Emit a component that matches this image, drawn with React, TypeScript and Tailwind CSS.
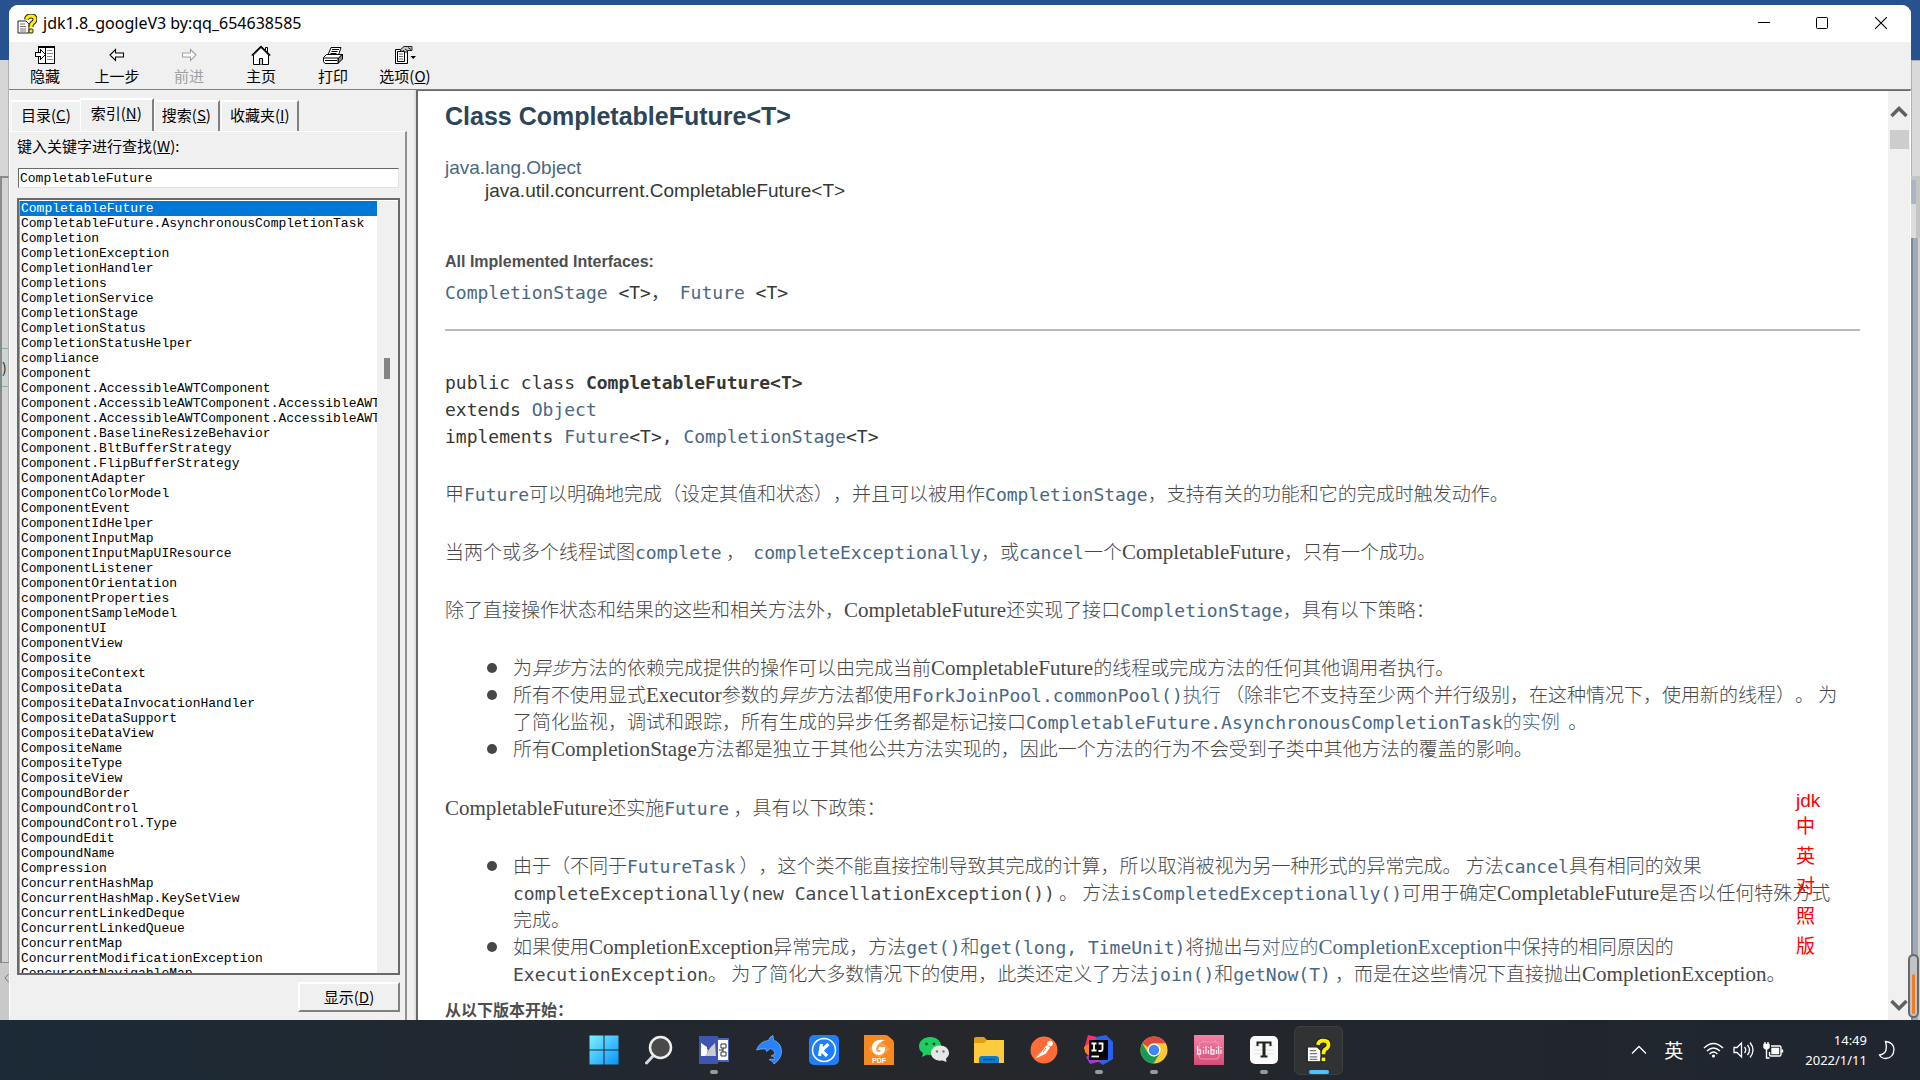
import type { ReactNode } from 'react';

const keywords = [
  'CompletableFuture', 'CompletableFuture.AsynchronousCompletionTask', 'Completion', 'CompletionException',
  'CompletionHandler', 'Completions', 'CompletionService', 'CompletionStage', 'CompletionStatus',
  'CompletionStatusHelper', 'compliance', 'Component', 'Component.AccessibleAWTComponent',
  'Component.AccessibleAWTComponent.AccessibleAWTComponentHandler',
  'Component.AccessibleAWTComponent.AccessibleAWTFocusHandler',
  'Component.BaselineResizeBehavior', 'Component.BltBufferStrategy', 'Component.FlipBufferStrategy',
  'ComponentAdapter', 'ComponentColorModel', 'ComponentEvent', 'ComponentIdHelper', 'ComponentInputMap',
  'ComponentInputMapUIResource', 'ComponentListener', 'ComponentOrientation', 'componentProperties',
  'ComponentSampleModel', 'ComponentUI', 'ComponentView', 'Composite', 'CompositeContext', 'CompositeData',
  'CompositeDataInvocationHandler', 'CompositeDataSupport', 'CompositeDataView', 'CompositeName',
  'CompositeType', 'CompositeView', 'CompoundBorder', 'CompoundControl', 'CompoundControl.Type',
  'CompoundEdit', 'CompoundName', 'Compression', 'ConcurrentHashMap', 'ConcurrentHashMap.KeySetView',
  'ConcurrentLinkedDeque', 'ConcurrentLinkedQueue', 'ConcurrentMap', 'ConcurrentModificationException',
  'ConcurrentNavigableMap',
];

const mono = "font-['DejaVu_Sans_Mono','Noto_Sans_CJK_SC',monospace]";

function Code({ children }: { children: ReactNode }) {
  return <code className="font-['DejaVu_Sans_Mono','Noto_Sans_CJK_SC',monospace] text-[18px] leading-none">{children}</code>;
}
function CodeLink({ children }: { children: ReactNode }) {
  return <a href="#" className="font-['DejaVu_Sans_Mono','Noto_Sans_CJK_SC',monospace] text-[18px] leading-none text-[#4a6782]">{children}</a>;
}
function Link({ children }: { children: ReactNode }) {
  return <a href="#" className="text-[#4a6782]">{children}</a>;
}
function Latin({ children }: { children: ReactNode }) {
  return <span className="font-['Liberation_Serif',serif] text-[21px] leading-none">{children}</span>;
}

function HelpIcon({ className }: { className: string }) {
  return (
    <svg viewBox="0 0 20 20" className={className} aria-hidden="true">
      <path d="M1 7h8l3 3v9H1z" fill="#fff" stroke="#222" />
      <path d="M3 10h5M3 12.500h6M3 15h6M3 17h6" stroke="#777" />
      <path d="M9.500 5.500Q10 2 14 2t4 3.500q0 2-2.500 3.500-1.500 1-1.500 4" fill="none" stroke="#222" strokeWidth="5" />
      <path d="M9.500 5.500Q10 2 14 2t4 3.500q0 2-2.500 3.500-1.500 1-1.500 4" fill="none" stroke="#ffee00" strokeWidth="3" />
      <rect x="12" y="15" width="4" height="4" rx="1" fill="#ffee00" stroke="#222" />
    </svg>
  );
}

function HideIcon() {
  return (
    <svg width="20" height="20" viewBox="0 0 20 20" shapeRendering="crispEdges" aria-hidden="true">
      <path d="M3.500 1.500h16v17h-16z" fill="#fff" stroke="#000" />
      <path d="M10.500 1v17M4 2.500h15" stroke="#000" />
      <path d="M12 5.500h5M12 8.500h6M12 11.500h5M12 14.500h6" stroke="#888" />
      <path d="M.500 7.500h5v-3l5 5-5 5v-3h-5z" fill="#fff" stroke="#000" />
    </svg>
  );
}
function ArrowIcon({ flip, color }: { flip?: boolean; color: string }) {
  return (
    <svg width="20" height="20" viewBox="0 0 20 20" className={flip ? '-scale-x-100' : ''} aria-hidden="true">
      <path d="M3 10l5.500-5.500v3.500h8v4h-8v3.500z" fill="#fff" stroke={color} strokeWidth="1.100" />
    </svg>
  );
}
function HomeIcon() {
  return (
    <svg width="20" height="20" viewBox="0 0 20 20" aria-hidden="true">
      <path d="M14.500 6V2.500h2V8" fill="#fff" stroke="#000" />
      <path d="M2.500 10v9.500h15V10L10 2.500z" fill="#fff" stroke="#000" />
      <path d="M.800 10.500L10 1.500l9.200 9" fill="none" stroke="#000" strokeWidth="1.500" />
      <path d="M8.500 19.500v-6h3v6" fill="#ccc" stroke="#000" />
    </svg>
  );
}
function PrintIcon() {
  return (
    <svg width="20" height="20" viewBox="0 0 20 20" aria-hidden="true">
      <path d="M5 10L8 2.500h10L15.500 10z" fill="#fff" stroke="#000" />
      <path d="M9 4.500h7M8.500 6.500h6M7.500 8.500h6" stroke="#000" />
      <path d="M15 14l4.500-5v5L15 18.500z" fill="#888" stroke="#000" />
      <path d="M.500 12.500l3-3h15.500l-4 4H.500z" fill="#fff" stroke="#000" />
      <path d="M.500 13h14.500v5.500H2l-1.500-2z" fill="#fff" stroke="#000" />
      <path d="M2 15.500h12" stroke="#000" />
    </svg>
  );
}
function OptionsIcon() {
  return (
    <svg width="22" height="20" viewBox="0 0 22 20" aria-hidden="true">
      <path d="M1.500 4.500h12v14h-12z" fill="#fff" stroke="#000" />
      <path d="M3.500 6.500h7v10h-7z" fill="#fff" stroke="#000" />
      <path d="M5 9h4M5 11.500h4M5 14h4" stroke="#666" />
      <path d="M6 5l4-3.500h8v4h-4l-2 2-2-2-2 1z" fill="#c8c8c8" stroke="#222" />
      <path d="M11 4l3 2M14 2.500l3 2" stroke="#222" />
      <path d="M16.500 11h5.500l-2.750 3z" fill="#000" />
    </svg>
  );
}

function Tool({ icon, label, disabled }: { icon: ReactNode; label: ReactNode; disabled?: boolean }) {
  return (
    <button
      type="button"
      disabled={disabled}
      className="flex w-[72px] flex-col items-center pt-[3px] leading-[22px] text-black disabled:text-[#a0a0a0]"
    >
      {icon}
      <span>{label}</span>
    </button>
  );
}

function Tab({ label, hotkey, active }: { label: string; hotkey: string; active?: boolean }) {
  return (
    <button
      type="button"
      role="tab"
      aria-selected={!!active}
      className={
        active
          ? 'h-[33px] border-t-2 border-r-2 border-l border-t-white border-r-[#808080] border-l-white bg-[#f0f0f0] px-2.5 pb-1'
          : 'mr-px h-[31px] border-t-2 border-r-2 border-l border-t-white border-r-[#808080] border-l-white px-[7px] pb-[2px] first:mr-0 first:border-r-0 first:px-[9px] last:px-2'
      }
    >
      {label}(<u>{hotkey}</u>)
    </button>
  );
}

function Sidebar() {
  return (
    <aside className="flex w-[398px] shrink-0 flex-col border-l border-white pt-2">
      <div role="tablist" className="flex items-end pl-px">
        <Tab label="目录" hotkey="C" />
        <Tab label="索引" hotkey="N" active />
        <Tab label="搜索" hotkey="S" />
        <Tab label="收藏夹" hotkey="I" />
      </div>
      <div className="flex min-h-0 flex-1 flex-col border-t border-r-2 border-t-white border-r-[#909090] pr-[5px] pl-[7px]">
        <label htmlFor="keyword" className="pt-[2px] leading-[24px]">
          键入关键字进行查找(<u>W</u>):
        </label>
        <input
          id="keyword"
          defaultValue="CompletableFuture"
          className="mt-[10px] mr-px ml-px h-5 border-t border-l border-t-[#696969] border-l-[#696969] border-r border-b border-r-[#e3e3e3] border-b-[#e3e3e3] bg-white px-px font-['Liberation_Mono',monospace] text-[13px] outline-none"
        />
        <div className="mt-[10px] flex min-h-0 flex-1 border-2 border-t-[#696969] border-r-[#696969] border-b-[#696969] border-l-[#696969] bg-white pt-px">
          <ul className="min-w-0 flex-1 overflow-hidden border-l border-[#a0a0a0] font-['Liberation_Mono',monospace] text-[13px] leading-[15px] text-black">
            {keywords.map((k, i) => (
              <li key={k} className={i === 0 ? 'bg-[#0078d7] pl-px whitespace-nowrap text-white' : 'pl-px whitespace-nowrap'}>
                {k}
              </li>
            ))}
          </ul>
          <div className="w-[21px] bg-[#f0f0f0] pt-[157px] pl-[7px]">
            <div className="h-[21px] w-1.5 bg-[#858585]" />
          </div>
        </div>
        <button
          type="button"
          className="mt-[7px] mb-2 h-[30px] w-[102px] self-end border-2 border-t-white border-r-[#808080] border-b-[#808080] border-l-white"
        >
          显示(<u>D</u>)
        </button>
      </div>
    </aside>
  );
}

function Item({ children }: { children: ReactNode }) {
  return (
    <li className="flex gap-4">
      <span className="mt-[10px] size-2.5 shrink-0 rounded-full bg-[#474747]" />
      <div className="min-w-0">{children}</div>
    </li>
  );
}

function Doc() {
  return (
    <article className="min-w-0 flex-1 overflow-hidden pt-[9px] pr-7 pl-[27px] font-['Noto_Sans_CJK_SC',sans-serif] text-[19px] leading-[27px] font-light text-[#474747] [text-spacing-trim:space-all]">
      <h2 className="font-['Liberation_Sans',sans-serif] text-[25px] leading-[32px] font-bold text-[#2c4557]">
        Class CompletableFuture&lt;T&gt;
      </h2>
      <div className="mt-6 font-['Liberation_Sans',sans-serif] text-[19px] leading-[23px] font-normal text-[#353833]">
        <div><Link>java.lang.Object</Link></div>
        <div className="pl-10">java.util.concurrent.CompletableFuture&lt;T&gt;</div>
      </div>
      <div className="mt-[47px] font-['Liberation_Sans',sans-serif] text-[16px] leading-[25px] font-bold text-[#4e4e4e]">
        All Implemented Interfaces:
      </div>
      <div className={`${mono} mt-[5px] text-[18px] font-normal text-[#353833]`}>
        <Link>CompletionStage</Link> &lt;T&gt;， <Link>Future</Link> &lt;T&gt;
      </div>
      <hr className="mt-[23px] border-t-2 border-[#bbb]" />
      <pre className={`${mono} mt-[38px] text-[18px] font-normal text-[#353833]`}>
        public class <b>CompletableFuture&lt;T&gt;</b>{'\n'}
        extends <Link>Object</Link>{'\n'}
        implements <Link>Future</Link>&lt;T&gt;, <Link>CompletionStage</Link>&lt;T&gt;
      </pre>
      <p className="mt-[29px]">
        甲<CodeLink>Future</CodeLink>可以明确地完成（设定其值和状态），并且可以被用作<CodeLink>CompletionStage</CodeLink>，支持有关的功能和它的完成时触发动作。
      </p>
      <p className="mt-[31px]">
        当两个或多个线程试图<CodeLink>complete</CodeLink>&nbsp;，&nbsp; <CodeLink>completeExceptionally</CodeLink>，或<CodeLink>cancel</CodeLink>一个<Latin>CompletableFuture</Latin>，只有一个成功。
      </p>
      <p className="mt-[31px]">
        除了直接操作状态和结果的这些和相关方法外，<Latin>CompletableFuture</Latin>还实现了接口<CodeLink>CompletionStage</CodeLink>，具有以下策略：
      </p>
      <ul className="mt-[31px] pr-3 pl-[42px]">
        <Item>
          为<i>异步</i>方法的依赖完成提供的操作可以由完成当前<Latin>CompletableFuture</Latin>的线程或完成方法的任何其他调用者执行。
        </Item>
        <Item>
          所有不使用显式<Latin>Executor</Latin>参数的<i>异步</i>方法都使用<CodeLink>ForkJoinPool.commonPool()</CodeLink><Link>执行</Link> （除非它不支持至少两个并行级别，在这种情况下，使用新的线程）。 为了简化监视，调试和跟踪，所有生成的异步任务都是标记接口<CodeLink>CompletableFuture.AsynchronousCompletionTask</CodeLink><Link>的实例</Link> &nbsp;。
        </Item>
        <Item>
          所有<Latin>CompletionStage</Latin>方法都是独立于其他公共方法实现的，因此一个方法的行为不会受到子类中其他方法的覆盖的影响。
        </Item>
      </ul>
      <p className="mt-8">
        <Latin>CompletableFuture</Latin>还实施<CodeLink>Future</CodeLink>&nbsp;，具有以下政策：
      </p>
      <ul className="mt-[31px] pr-3 pl-[42px]">
        <Item>
          由于（不同于<CodeLink>FutureTask</CodeLink>&nbsp;），这个类不能直接控制导致其完成的计算，所以取消被视为另一种形式的异常完成。 方法<CodeLink>cancel</CodeLink>具有相同的效果
          <Code>completeExceptionally(new CancellationException())</Code>&nbsp;。 方法<CodeLink>isCompletedExceptionally()</CodeLink>可用于确定<Latin>CompletableFuture</Latin>是否以任何特殊方式完成。
        </Item>
        <Item>
          如果使用<Latin>CompletionException</Latin>异常完成，方法<CodeLink>get()</CodeLink>和<CodeLink>get(long, TimeUnit)</CodeLink>将抛出与<Link>对应的<Latin>CompletionException</Latin>中</Link>保持的相同原因的
          <Code>ExecutionException</Code>。 为了简化大多数情况下的使用，此类还定义了方法<CodeLink>join()</CodeLink>和<CodeLink>getNow(T)</CodeLink>&nbsp;，而是在这些情况下直接抛出<Latin>CompletionException</Latin>。
        </Item>
      </ul>
      <div className="mt-[10px] text-[16px] font-bold text-[#4e4e4e]">从以下版本开始：</div>
    </article>
  );
}

function TaskItem({ name, state, children }: { name: string; state?: 'open' | 'active'; children: ReactNode }) {
  return (
    <button
      type="button"
      aria-label={name}
      className={
        state === 'active'
          ? 'relative mx-[3px] flex size-[49px] items-center justify-center rounded-md border border-[#3c3f42] bg-[#303234]'
          : 'relative flex h-[49px] w-[55px] items-center justify-center'
      }
    >
      {children}
      {state === 'open' && <span className="absolute bottom-px h-1 w-2 rounded-full bg-[#9a9a9a]" />}
      {state === 'active' && <span className="absolute bottom-0 h-1 w-5 rounded-full bg-[#4cc2ff]" />}
    </button>
  );
}

function Taskbar() {
  return (
    <footer className="grid h-[60px] shrink-0 grid-cols-[1fr_auto_1fr] items-center bg-linear-to-r from-[#1c2a37] via-[#25272b] to-[#1f2630] pl-0.5 text-white">
      <div />
      <nav className="flex items-center">
        <TaskItem name="开始">
          <svg width="30" height="30" viewBox="0 0 30 30">
            <defs>
              <linearGradient id="win" x1="0" y1="0" x2="1" y2="1">
                <stop offset="0" stopColor="#7df0ff" /><stop offset="1" stopColor="#0a93ff" />
              </linearGradient>
            </defs>
            <path d="M0.500 .500h14v14H.500zM15.500 .500h14v14h-14zM.500 15.500h14v14H.500zM15.500 15.500h14v14h-14z" fill="url(#win)" />
          </svg>
        </TaskItem>
        <TaskItem name="搜索">
          <svg width="30" height="30" viewBox="0 0 30 30">
            <path d="M9 21l-6.500 7" stroke="#d8d8d8" strokeWidth="3" strokeLinecap="round" />
            <circle cx="16.500" cy="12.500" r="10.500" fill="#4a4a4a" stroke="#eee" strokeWidth="2.500" />
          </svg>
        </TaskItem>
        <TaskItem name="Visio" state="open">
          <svg width="30" height="30" viewBox="0 0 30 30">
            <path d="M0 1h19v28H0z" fill="#3f55b0" /><path d="M19 3h11v24H19z" fill="#4a62c0" />
            <path d="M19 5h10v20H19z" fill="#fff" />
            <path d="M22 9h5v4h-5zM22 17h5v4h-5zM20 15h4v-2M24 15v2" fill="none" stroke="#333" />
            <path d="M2 8l6 4v9H2z" fill="#fff" /><path d="M16 8l-5 5-5 8h11z" fill="#ccc" /><path d="M2 8l7 7-3 6H2z" fill="#fff" />
          </svg>
        </TaskItem>
        <TaskItem name="Dolphin">
          <svg width="30" height="30" viewBox="0 0 30 30">
            <path d="M2.500 15Q6 6 14.500 5.500q1-4 4.500-5l.500 4.500Q27.500 8 27.500 17q0 4-2.500 7-2 3-5 5-1-3-5-4.500 3-1 5.500 0 .500-3-3.500-3.500 2-1.500 4-1.500-.500-5-4.500-6l-4 3-.500-2.500Q7 13.500 2.500 15z" fill="#2684ff" stroke="#9cc4f5" strokeWidth=".600" />
          </svg>
        </TaskItem>
        <TaskItem name="酷狗音乐">
          <svg width="30" height="30" viewBox="0 0 30 30">
            <rect width="30" height="30" rx="5" fill="#1e7ffb" /><circle cx="15" cy="15" r="11.500" fill="none" stroke="#fff" strokeWidth="1.500" />
            <path d="M12.500 9l-2 12M19.500 9l-7 6.500L18 21" fill="none" stroke="#fff" strokeWidth="3.200" />
          </svg>
        </TaskItem>
        <TaskItem name="福昕阅读器">
          <svg width="30" height="30" viewBox="0 0 30 30">
            <path d="M0 0h22l8 7v23H0z" fill="#f6891f" /><path d="M23 0v6h7z" fill="#f6891f" />
            <path d="M15 5l11 9-11 9-11-9z" fill="#f9a04a" />
            <path d="M21 5q-12-2-13 7 0 8 7 8 7-1 6-8h-6l-1 3h3q-1 2.500-3 2-3-1-1.500-5Q15 7 21 5z" fill="#fff" />
            <text x="15" y="28" fontSize="7" fontWeight="bold" textAnchor="middle" fill="#fff" fontFamily="Liberation Sans">PDF</text>
          </svg>
        </TaskItem>
        <TaskItem name="微信">
          <svg width="30" height="30" viewBox="0 0 30 30">
            <path d="M11 2c7 0 11 4 11 9s-5 9-11 9l-3-.500L3 22l1-4C1 16 0 14 0 11c0-5 5-9 11-9z" fill="#1fce62" />
            <path d="M21 10.500c5 0 9 3 9 7.500 0 2-1 4-3 5.500l.500 3.500-4-1.500c-7 1-11.500-3-11.500-7.500s4-7.500 9-7.500z" fill="#e6e6e6" />
            <circle cx="7.500" cy="9" r="1.400" fill="#0a5a2c" /><circle cx="15" cy="9" r="1.400" fill="#0a5a2c" />
            <circle cx="18" cy="16.500" r="1.200" fill="#777" /><circle cx="24.500" cy="16.500" r="1.200" fill="#777" />
          </svg>
        </TaskItem>
        <TaskItem name="文件资源管理器">
          <svg width="30" height="30" viewBox="0 0 30 30">
            <path d="M0 4q0-2 2-2h8l3 3v5H0z" fill="#e0a012" /><path d="M0 8h10l3-3h17v23H0z" fill="#fecb3e" />
            <path d="M5 28v-4q0-3 3-3h14q3 0 3 3v4z" fill="#0f7bd0" /><path d="M9 24.500h12" stroke="#0a4f90" strokeWidth="1.500" />
          </svg>
        </TaskItem>
        <TaskItem name="Postman">
          <svg width="30" height="30" viewBox="0 0 30 30">
            <circle cx="15" cy="15" r="13.500" fill="#ff6c37" />
            <circle cx="21" cy="8.500" r="2.800" fill="#fff" />
            <path d="M18 10l3 2.500-4 6-9 4.500-1-.500 6-6.500z" fill="#fff" /><path d="M14 17l3-4" stroke="#ff6c37" />
          </svg>
        </TaskItem>
        <TaskItem name="IntelliJ IDEA" state="open">
          <svg width="30" height="30" viewBox="0 0 30 30">
            <path d="M4 0l9 2v12H0z" fill="#fe2c6f" /><path d="M0 12l9-6v20l-8-9z" fill="#ff7a2a" />
            <path d="M12 2l10-2 7 7v17l-10 6-8-6z" fill="#2a62f0" /><path d="M2 22l7-6 9 10-12 3z" fill="#a23bd0" />
            <rect x="5" y="5" width="19" height="20" fill="#070707" />
            <path d="M7.500 8.500h5M10 8.500v7M7.500 15.500h5M14.500 8.500h4v5.500q0 2-2 2h-2" fill="none" stroke="#fff" strokeWidth="1.800" />
            <path d="M7.500 21.500h7.500" stroke="#fff" strokeWidth="1.800" />
          </svg>
        </TaskItem>
        <TaskItem name="Chrome" state="open">
          <svg width="30" height="30" viewBox="0 0 30 30">
            <circle cx="15" cy="15" r="13.500" fill="#fcc934" />
            <path d="M3.300 8.250A13.500 13.500 0 0 1 26.700 8.250H15a6.750 6.750 0 0 0-6 4z" fill="#dd4b40" />
            <path d="M3.300 8.250A13.500 13.500 0 0 0 14.500 28.500L20.800 18.400 15 21.700 9.200 18.400z" fill="#179c58" />
            <circle cx="15" cy="15" r="6.500" fill="#fff" /><circle cx="15" cy="15" r="5.200" fill="#4285f4" />
          </svg>
        </TaskItem>
        <TaskItem name="哔哩哔哩">
          <svg width="30" height="30" viewBox="0 0 30 30">
            <defs>
              <linearGradient id="bili" x1="0" y1="0" x2="0" y2="1">
                <stop offset="0" stopColor="#f581a6" /><stop offset="1" stopColor="#d44d78" />
              </linearGradient>
            </defs>
            <rect width="30" height="30" fill="url(#bili)" />
            <path d="M10 7L8 5M20 7l2-2M8 7h14q3 0 3 3v11q0 3-3 3H8q-3 0-3-3V10q0-3 3-3z" fill="none" stroke="#f294b2" />
            <path d="M3.500 11v8h3v-4h-3M9.500 15v4M9.500 12v1M12 11v8M14.500 15v4M14.500 12v1M17 11v8h3v-4h-3M22.500 15v4M22.500 12v1M24.500 11v8M27 15v4M27 12v1" fill="none" stroke="#ffe4ee" strokeWidth="1.300" />
          </svg>
        </TaskItem>
        <TaskItem name="Typora" state="open">
          <svg width="30" height="30" viewBox="0 0 30 30">
            <rect x="1" y="1" width="28" height="28" rx="5" fill="#fafafa" />
            <path d="M5 11h20M5 15h20M5 19h20" stroke="#e4e4e4" />
            <path d="M8.500 11V7.500h13V11M15 7.500V21M11.500 21.500h7" fill="none" stroke="#222" strokeWidth="2" />
            <path d="M15 8v13" stroke="#222" strokeWidth="3" />
          </svg>
        </TaskItem>
        <TaskItem name="HTML 帮助" state="active"><HelpIcon className="size-[25px]" /></TaskItem>
      </nav>
      <div className="flex items-center justify-end pr-6 font-['Noto_Sans',sans-serif]">
        <svg width="16" height="10" viewBox="0 0 16 10" className="mr-[17px]"><path d="M1 8.500l7-7 7 7" fill="none" stroke="#fff" strokeWidth="1.300" /></svg>
        <span className="mr-5 font-['Noto_Sans_CJK_SC',sans-serif] text-[19px]">英</span>
        <svg width="21" height="17" viewBox="0 0 21 17" className="mr-[9px]" fill="none" stroke="#fff" strokeWidth="1.400">
          <path d="M1 6q9.500-9 19 0M4 9q6.500-6 13 0M6.500 12q4-4 8 0" /><circle cx="10.500" cy="14" r="1.600" fill="#fff" stroke="none" />
        </svg>
        <svg width="21" height="18" viewBox="0 0 21 18" className="mr-[9px]" fill="none" stroke="#fff" strokeWidth="1.300">
          <path d="M1 6.500h3L8.500 2v14L4 11.500H1zM11.500 6q2.500 3 0 6M14.500 4q4 5 0 10M17 1.500q6 7.500 0 15" />
        </svg>
        <svg width="21" height="17" viewBox="0 0 21 17" className="mr-[21px]" fill="none" stroke="#fff" strokeWidth="1.400">
          <path d="M8 4h8.500q1.500 0 1.500 1.500v7q0 1.500-1.500 1.500H8q-1.500 0-1.500-1.500V10M19.500 7.500v3" /><path d="M9 6.500h6.500v5H9z" fill="#fff" /><path d="M2 0v3M5 0v3M3.500 6v10h3" /><path d="M1 2.500h5v3q-2.500 3-5 0z" fill="#fff" />
        </svg>
        <div className="mr-[11px] text-right text-[13px] leading-5"><div>14:49</div><div>2022/1/11</div></div>
        <svg width="18" height="20" viewBox="0 0 18 20"><path d="M7.500 1.500q8 .500 8.500 8-.500 8.500-8.500 9-4 0-6-3.500 5.500-1 6.500-5 1-4-.500-8.500z" fill="none" stroke="#fff" strokeWidth="1.300" /></svg>
      </div>
    </footer>
  );
}

export default function App() {
  return (
    <div className="flex h-screen flex-col overflow-hidden bg-[#28528f] font-['Noto_Sans_CJK_SC',sans-serif] text-[15px]">
      <div className="flex min-h-0 flex-1">
        <div className="flex w-[9px] shrink-0 flex-col pt-[60px]">
          <div className="h-[116px] border-r border-[#b0b0b0] bg-[#d6d6d6]" />
          <div className="flex-1 overflow-hidden border-t-2 border-r border-l-2 border-t-[#8a8a8a] border-r-[#b0b0b0] border-l-[#8a8a8a] bg-[#d2d4d3] pt-[170px]">
            <div className="flex h-[39px] items-center border-y border-[#84b596] bg-[#ccd6d0] text-[14px] text-[#222]">)</div>
          </div>
          <div className="flex h-[58px] justify-end border-t border-[#8a8a8a] bg-[#c9c9c9] pt-[11px]">
            <svg width="5" height="8" viewBox="0 0 5 8"><path d="M4.500 0L1 4l3.500 4" fill="none" stroke="#777" /></svg>
          </div>
        </div>
        <div className="mt-[5px] flex min-w-0 flex-1 flex-col overflow-hidden rounded-t-[9px] bg-[#f0f0f0]">
          <header className="flex h-[37px] shrink-0 items-center bg-white pl-2">
            <HelpIcon className="size-5" />
            <h1 className="ml-1.5 flex-1 pb-px font-['Noto_Sans',sans-serif] text-[16px] leading-5 text-black">jdk1.8_googleV3 by:qq_654638585</h1>
            <div className="flex self-start">
              <button type="button" aria-label="最小化" className="flex h-[36px] w-[58px] items-center justify-center">
                <svg width="12" height="12" viewBox="0 0 12 12"><path d="M0 5.500h12" stroke="#000" /></svg>
              </button>
              <button type="button" aria-label="最大化" className="flex h-[36px] w-[58px] items-center justify-center">
                <svg width="12" height="12" viewBox="0 0 12 12"><rect x=".500" y=".500" width="11" height="11" rx="1" fill="none" stroke="#000" /></svg>
              </button>
              <button type="button" aria-label="关闭" className="flex h-[36px] w-[60px] items-center justify-center">
                <svg width="12" height="12" viewBox="0 0 12 12"><path d="M0 0l12 12M12 0L0 12" stroke="#000" strokeWidth="1.100" /></svg>
              </button>
            </div>
          </header>
          <div role="toolbar" className="flex h-[47px] shrink-0">
            <Tool icon={<HideIcon />} label="隐藏" />
            <Tool icon={<ArrowIcon color="#000" />} label="上一步" />
            <Tool icon={<ArrowIcon color="#a0a0a0" flip />} label="前进" disabled />
            <Tool icon={<HomeIcon />} label="主页" />
            <Tool icon={<PrintIcon />} label="打印" />
            <Tool icon={<OptionsIcon />} label={<>选项(<u>O</u>)</>} />
          </div>
          <div className="flex min-h-0 flex-1 border-t border-[#808080]">
            <Sidebar />
            <div className="w-[9px] shrink-0 border-r-2 border-[#e0e0e0] bg-[#f0f0f0]" />
            <main className="relative flex min-w-0 flex-1 border-t border-r border-l-2 border-t-[#696969] border-r-white border-l-[#696969] bg-white">
              <Doc />
              <div className="flex w-[22px] shrink-0 flex-col items-center bg-[#f0f0f0] pt-[13px] pb-[7px]">
                <svg width="18" height="14" viewBox="0 0 18 14"><path d="M1.500 12L9 4.500l7.500 7.500" fill="none" stroke="#606060" strokeWidth="3.500" /></svg>
                <div className="mt-3 h-[19px] w-[19px] bg-[#cdcdcd]" />
                <svg width="18" height="14" viewBox="0 0 18 14" className="mt-auto"><path d="M1.500 2L9 9.500 16.500 2" fill="none" stroke="#606060" strokeWidth="3.500" /></svg>
              </div>
              <div className="absolute right-[90px] bottom-[60px] w-6 text-[19px] leading-[30px] text-[#ff0000]">
                <div className="font-['Liberation_Sans',sans-serif] leading-[18px]">jdk</div>
                <div>中</div><div>英</div><div>对</div><div>照</div><div>版</div>
              </div>
            </main>
          </div>
        </div>
        <div className="relative flex w-[9px] shrink-0 flex-col pt-[60px]">
          <div className="h-[116px] border-t border-l border-[#b0b0b0] bg-[#d9d9d9]" />
          <div className="h-[28px] border-t-4 border-r-4 border-[#c4c4c4] bg-[#a9b5c1]" />
          <div className="h-[34px] border-r-4 border-[#c4c4c4] bg-[#dcdcdc]" />
          <div className="flex-1 border-r-2 border-l-2 border-r-[#d0d0d0] border-l-[#808894] bg-[#a0aab8]" />
          <div className="absolute right-px bottom-0.5 flex h-16 w-[11px] items-end rounded-full border-2 border-[#686868] bg-[#c0c4c8] p-0.5">
            <div className="h-[40px] w-full rounded-full bg-[#f57a1f]" />
          </div>
        </div>
      </div>
      <Taskbar />
    </div>
  );
}
